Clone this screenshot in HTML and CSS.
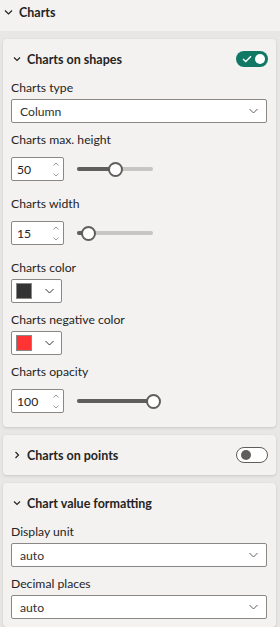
FILE: index.html
```html
<!DOCTYPE html>
<html>
<head>
<meta charset="utf-8">
<link rel="stylesheet" href="styles.css">
</head>
<body>
<div class="pane">
  <div class="pane-head">
    <svg class="chev" width="9" height="9" viewBox="0 0 9 9"><path d="M1 2.5 L4.5 6 L8 2.5" fill="none" stroke="#252423" stroke-width="1.2"/></svg>
    <span>Charts</span>
  </div>
  <div class="cards">
    <section class="card">
      <div class="card-head">
        <svg class="chev" width="8" height="8" viewBox="0 0 8 8"><path d="M1 2.5 L4 5.5 L7 2.5" fill="none" stroke="#252423" stroke-width="1.2"/></svg>
        <span class="title">Charts on shapes</span>
        <span class="toggle on">
          <svg width="10" height="8" viewBox="0 0 10 8"><path d="M1 4 L3.8 6.6 L9 1.2" fill="none" stroke="#fff" stroke-width="1.4"/></svg>
          <span class="knob"></span>
        </span>
      </div>
      <div class="card-body">
        <div class="field">
          <div class="lbl">Charts type</div>
          <div class="dropdown"><span>Column</span><svg width="9" height="6" viewBox="0 0 9 6"><path d="M0.5 1 L4.5 5 L8.5 1" fill="none" stroke="#605e5c" stroke-width="1"/></svg></div>
        </div>
        <div class="field">
          <div class="lbl">Charts max. height</div>
          <div class="slider-row">
            <div class="spin"><span class="num">50</span><span class="arrows"><svg width="6" height="4" viewBox="0 0 6 4"><path d="M0.5 3.5 L3 1 L5.5 3.5" fill="none" stroke="#a19f9d" stroke-width="1"/></svg><svg width="6" height="4" viewBox="0 0 6 4"><path d="M0.5 0.5 L3 3 L5.5 0.5" fill="none" stroke="#a19f9d" stroke-width="1"/></svg></span></div>
            <div class="slider"><div class="fill" style="width:50%"></div><div class="thumb" style="left:50%"></div></div>
          </div>
        </div>
        <div class="field">
          <div class="lbl">Charts width</div>
          <div class="slider-row">
            <div class="spin"><span class="num">15</span><span class="arrows"><svg width="6" height="4" viewBox="0 0 6 4"><path d="M0.5 3.5 L3 1 L5.5 3.5" fill="none" stroke="#a19f9d" stroke-width="1"/></svg><svg width="6" height="4" viewBox="0 0 6 4"><path d="M0.5 0.5 L3 3 L5.5 0.5" fill="none" stroke="#a19f9d" stroke-width="1"/></svg></span></div>
            <div class="slider"><div class="fill" style="width:15%"></div><div class="thumb" style="left:15%"></div></div>
          </div>
        </div>
        <div class="field">
          <div class="lbl">Charts color</div>
          <div class="picker"><span class="swatch dark"></span><svg width="9" height="6" viewBox="0 0 9 6"><path d="M0.5 1 L4.5 5 L8.5 1" fill="none" stroke="#323130" stroke-width="1"/></svg></div>
        </div>
        <div class="field">
          <div class="lbl">Charts negative color</div>
          <div class="picker"><span class="swatch red"></span><svg width="9" height="6" viewBox="0 0 9 6"><path d="M0.5 1 L4.5 5 L8.5 1" fill="none" stroke="#323130" stroke-width="1"/></svg></div>
        </div>
        <div class="field">
          <div class="lbl">Charts opacity</div>
          <div class="slider-row">
            <div class="spin"><span class="num">100</span><span class="arrows"><svg width="6" height="4" viewBox="0 0 6 4"><path d="M0.5 3.5 L3 1 L5.5 3.5" fill="none" stroke="#a19f9d" stroke-width="1"/></svg><svg width="6" height="4" viewBox="0 0 6 4"><path d="M0.5 0.5 L3 3 L5.5 0.5" fill="none" stroke="#a19f9d" stroke-width="1"/></svg></span></div>
            <div class="slider"><div class="fill" style="width:100%"></div><div class="thumb" style="left:100%"></div></div>
          </div>
        </div>
      </div>
    </section>

    <section class="card">
      <div class="card-head">
        <svg class="chev" width="8" height="8" viewBox="0 0 8 8"><path d="M2.5 1 L5.5 4 L2.5 7" fill="none" stroke="#252423" stroke-width="1.2"/></svg>
        <span class="title">Charts on points</span>
        <span class="toggle off"><span class="knob"></span></span>
      </div>
    </section>

    <section class="card">
      <div class="card-head">
        <svg class="chev" width="8" height="8" viewBox="0 0 8 8"><path d="M1 2.5 L4 5.5 L7 2.5" fill="none" stroke="#252423" stroke-width="1.2"/></svg>
        <span class="title">Chart value formatting</span>
      </div>
      <div class="card-body">
        <div class="field">
          <div class="lbl">Display unit</div>
          <div class="dropdown"><span>auto</span><svg width="9" height="6" viewBox="0 0 9 6"><path d="M0.5 1 L4.5 5 L8.5 1" fill="none" stroke="#605e5c" stroke-width="1"/></svg></div>
        </div>
        <div class="field">
          <div class="lbl">Decimal places</div>
          <div class="dropdown"><span>auto</span><svg width="9" height="6" viewBox="0 0 9 6"><path d="M0.5 1 L4.5 5 L8.5 1" fill="none" stroke="#605e5c" stroke-width="1"/></svg></div>
        </div>
      </div>
    </section>
  </div>
</div>
</body>
</html>
```

FILE: styles.css
```css
* { box-sizing: border-box; }
html, body { margin: 0; padding: 0; }
body {
  background: #e8e7e6;
  font-family: "Lato", "Open Sans", sans-serif;
  font-size: 12.2px;
  color: #252423;
  overflow: hidden;
}
.pane-head {
  height: 31px;
  padding: 0 0 7px 4px;
  background: #f3f2f1;
  display: flex;
  align-items: center;
  gap: 6px;
  font-size: 12.5px;
  font-weight: 700;
}
.chev { flex: none; display: block; }
.cards {
  display: flex;
  flex-direction: column;
  gap: 8px;
  padding: 8px 4px 0 3px;
}
.card {
  background: #f3f2f1;
  border-radius: 4px;
  box-shadow: 0 1px 3px rgba(0, 0, 0, 0.14);
}
.card-head {
  height: 40px;
  display: flex;
  align-items: center;
  padding: 0 8px 0 10px;
  gap: 6px;
}
.title {
  flex: 1;
  font-size: 12.5px;
  font-weight: 700;
}
.toggle {
  width: 32px;
  height: 16px;
  border-radius: 8px;
  display: flex;
  align-items: center;
  position: relative;
}
.toggle.on {
  background: #117865;
  justify-content: space-between;
  padding: 0 3px 0 6px;
}
.toggle.on .knob {
  width: 10px; height: 10px; border-radius: 50%; background: #fff;
}
.toggle.off {
  border: 1px solid #605e5c;
  background: #fff;
  padding-left: 4px;
}
.toggle.off .knob {
  width: 10px; height: 10px; border-radius: 50%; background: #605e5c;
}
.card-body {
  display: flex;
  flex-direction: column;
  gap: 9px;
  padding: 1px 9px 8px 8px;
}
.field {
  display: flex;
  flex-direction: column;
  gap: 3px;
}
.lbl {
  line-height: 16px;
  height: 16px;
  white-space: nowrap;
}
.dropdown {
  height: 24px;
  background: #fff;
  border: 1px solid #8a8886;
  border-radius: 2px;
  display: flex;
  align-items: center;
  justify-content: space-between;
  padding: 0 8px 0 8px;
  color: #323130;
}
.dropdown svg { display: block; }
.slider-row {
  height: 36px;
  display: flex;
  align-items: center;
}
.spin {
  width: 53px;
  height: 24px;
  background: #fff;
  border: 1px solid #8a8886;
  border-radius: 2px;
  display: flex;
  align-items: center;
  justify-content: space-between;
  padding: 0 4px 0 5px;
}
.arrows {
  display: flex;
  flex-direction: column;
  gap: 7px;
}
.arrows svg { display: block; }
.slider {
  margin-left: 13px;
  width: 76px;
  height: 4px;
  border-radius: 2px;
  background: #c8c6c4;
  position: relative;
}
.fill {
  height: 4px;
  border-radius: 2px;
  background: #605e5c;
}
.thumb {
  position: absolute;
  top: 50%;
  width: 15px;
  height: 15px;
  margin: -7.5px 0 0 -7.5px;
  border-radius: 50%;
  border: 2px solid #605e5c;
  background: #fff;
}
.picker {
  width: 51px;
  height: 24px;
  background: #fff;
  border: 1px solid #8a8886;
  border-radius: 2px;
  display: flex;
  align-items: center;
  padding: 0 7px 0 4px;
  justify-content: space-between;
}
.picker svg { display: block; }
.swatch {
  width: 16px;
  height: 16px;
  border: 1px solid #8a8886;
}
.swatch.dark { background: #333333; }
.swatch.red { background: #ff3333; }
```
